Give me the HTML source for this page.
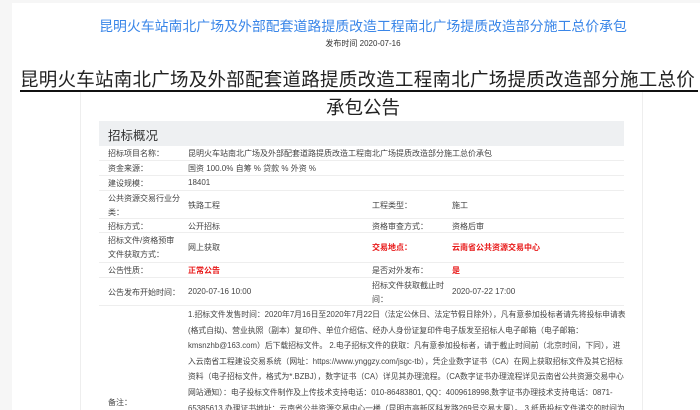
<!DOCTYPE html>
<html style="overflow:hidden;width:700px;height:410px"><head><meta charset="utf-8"><style>
*{margin:0;padding:0;box-sizing:border-box}
body{width:700px;height:410px;overflow:hidden;background:#f6f6f6;font-family:"Liberation Sans","Noto Sans CJK SC",sans-serif;position:relative}
#w{position:absolute;left:0;top:0;width:700px;height:410px;overflow:hidden}
.main{position:absolute;left:12px;top:3px;right:0;bottom:0;background:#fff}
.a{position:absolute;white-space:nowrap}
.t1{left:0;width:726px;top:16px;text-align:center;color:#3a86e8;font-size:13.9px}
.dt{left:0;width:726px;top:38px;text-align:center;color:#333;font-size:8px}
.t2{left:20px;top:66px;font-size:18.5px;color:#222;letter-spacing:0.25px}
.ul{position:absolute;left:20px;top:90px;width:678px;height:2px;background:#111}
.t3{left:0;width:726px;top:94px;text-align:center;font-size:18.5px;color:#222}
.vl{position:absolute;top:92px;bottom:0;width:1px;background:#eee}
.hd{position:absolute;left:99px;top:121px;width:525px;height:25px;background:#eef0f2;font-size:12.5px;color:#333;padding:4px 0 0 9px}
.row{position:absolute;left:99px;width:525px;border-bottom:1px solid #eee;font-size:8px;color:#444}
.row span{position:absolute;white-space:nowrap}
.r{color:#e81818;font-weight:bold}
.rm{position:absolute;left:188px;top:307px;width:440px;height:103px;overflow:hidden;font-size:7.8px;line-height:15.6px;color:#444}
</style></head><body><div id="w">
<div class="main"></div>
<div class="a t1">昆明火车站南北广场及外部配套道路提质改造工程南北广场提质改造部分施工总价承包</div>
<div class="a dt">发布时间 2020-07-16</div>
<div class="a t2">昆明火车站南北广场及外部配套道路提质改造工程南北广场提质改造部分施工总价</div>
<div class="ul"></div>
<div class="vl" style="left:80px"></div>
<div class="vl" style="left:642px"></div>
<div class="a t3">承包公告</div>
<div class="hd">招标概况</div>
<div class="row" style="top:146px;height:15px"><span style="left:9px;top:2px">招标项目名称：</span><span style="left:89px;top:2px">昆明火车站南北广场及外部配套道路提质改造工程南北广场提质改造部分施工总价承包</span></div>
<div class="row" style="top:161px;height:15px"><span style="left:9px;top:2px">资金来源：</span><span style="left:89px;top:2px">国资 100.0% 自筹 % 贷款 % 外资 %</span></div>
<div class="row" style="top:176px;height:15px"><span style="left:9px;top:2px">建设规模：</span><span style="left:89px;top:2px">18401</span></div>
<div class="row" style="top:191px;height:28px"><span style="left:9px;top:2px">公共资源交易行业分</span><span style="left:9px;top:16px">类：</span><span style="left:89px;top:9px">铁路工程</span><span style="left:273px;top:9px">工程类型：</span><span style="left:353px;top:9px">施工</span></div>
<div class="row" style="top:219px;height:14px"><span style="left:9px;top:2px">招标方式：</span><span style="left:89px;top:2px">公开招标</span><span style="left:273px;top:2px">资格审查方式：</span><span style="left:353px;top:2px">资格后审</span></div>
<div class="row" style="top:233px;height:30px"><span style="left:9px;top:2px">招标文件/资格预审</span><span style="left:9px;top:16px">文件获取方式：</span><span style="left:89px;top:9px">网上获取</span><span class="r" style="left:273px;top:9px">交易地点：</span><span class="r" style="left:353px;top:9px">云南省公共资源交易中心</span></div>
<div class="row" style="top:263px;height:15px"><span style="left:9px;top:2px">公告性质：</span><span class="r" style="left:89px;top:2px">正常公告</span><span style="left:273px;top:2px">是否对外发布：</span><span class="r" style="left:353px;top:2px">是</span></div>
<div class="row" style="top:278px;height:28px"><span style="left:9px;top:9px">公告发布开始时间：</span><span style="left:89px;top:9px">2020-07-16 10:00</span><span style="left:273px;top:2px">招标文件获取截止时</span><span style="left:273px;top:16px">间：</span><span style="left:353px;top:9px">2020-07-22 17:00</span></div>
<div class="a" style="left:108px;top:397px;font-size:8px;color:#444">备注：</div>
<div class="rm">1.招标文件发售时间：2020年7月16日至2020年7月22日（法定公休日、法定节假日除外），凡有意参加投标者请先将投标申请表(格式自拟)、营业执照（副本）复印件、单位介绍信、经办人身份证复印件电子版发至招标人电子邮箱（电子邮箱：kmsnzhb@163.com）后下载招标文件。 2.电子招标文件的获取：凡有意参加投标者，请于截止时间前（北京时间，下同），进入云南省工程建设交易系统（网址：https://www.ynggzy.com/jsgc-tb），凭企业数字证书（CA）在网上获取招标文件及其它招标资料（电子招标文件，格式为*.BZBJ），数字证书（CA）详见其办理流程。（CA数字证书办理流程详见云南省公共资源交易中心网站通知）：电子投标文件制作及上传技术支持电话：010-86483801, QQ：4009618998,数字证书办理技术支持电话：0871-65385613,办理证书地址：云南省公共资源交易中心一楼（昆明市高新区科发路269号交易大厦）。 3.纸质投标文件递交的时间为2020年7月23日10时00分至10时30分，递交投标文件的截止时间（投标截止时间，下同）为2020年7月23日10时30分，递交地</div>
</div></body></html>
